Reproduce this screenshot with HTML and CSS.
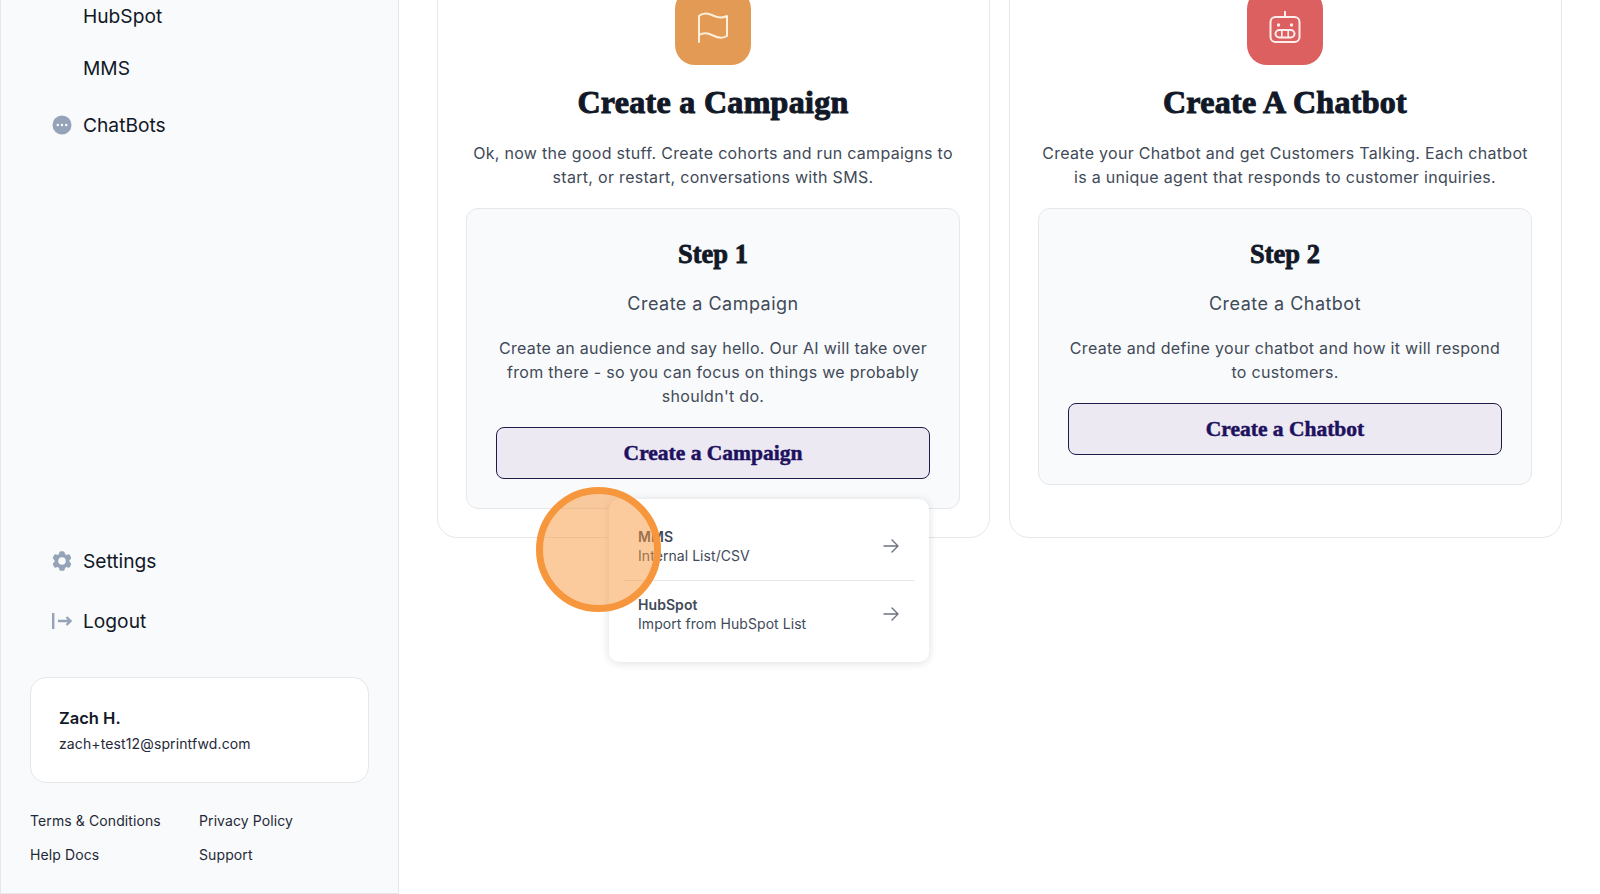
FILE: index.html
```html
<!DOCTYPE html>
<html lang="en">
	<head>
		<meta charset="UTF-8">
		<title>Get started</title>
		<link rel="stylesheet" href="styles.css">
	</head>
	<body>
		<div class="app">
			<aside class="sidebar">
				<ul class="nav nav-top">
					<li class="nav-sub"><a href="#">HubSpot</a></li>
					<li class="nav-sub"><a href="#">MMS</a></li>
					<li class="nav-main">
						<svg class="nav-icon" viewBox="0 0 20 20"><circle cx="10" cy="10" r="9.500" fill="#94a3b8"/><circle cx="5.800" cy="10" r="1.200" fill="#fff"/><circle cx="10" cy="10" r="1.200" fill="#fff"/><circle cx="14.200" cy="10" r="1.200" fill="#fff"/></svg>
						<a href="#">ChatBots</a>
					</li>
				</ul>
				<ul class="nav nav-bottom">
					<li class="nav-main">
						<svg class="nav-icon" viewBox="2 2 20 20"><path fill="#94a3b8" fill-rule="evenodd" d="M11.078 2.25c-.917 0-1.699.663-1.85 1.567L9.05 4.889c-.02.12-.115.26-.297.348a7.493 7.493 0 0 0-.986.57c-.166.115-.334.126-.45.083L6.3 5.508a1.875 1.875 0 0 0-2.282.819l-.922 1.597a1.875 1.875 0 0 0 .432 2.385l.84.692c.095.078.17.229.154.43a7.598 7.598 0 0 0 0 1.139c.015.2-.059.352-.153.43l-.841.692a1.875 1.875 0 0 0-.432 2.385l.922 1.597a1.875 1.875 0 0 0 2.282.818l1.019-.382c.115-.043.283-.031.45.082.312.214.641.405.985.57.182.088.277.228.297.35l.178 1.071c.151.904.933 1.567 1.85 1.567h1.844c.916 0 1.699-.663 1.85-1.567l.178-1.072c.02-.12.114-.26.297-.349.344-.165.673-.356.985-.57.167-.114.335-.125.45-.082l1.02.382a1.875 1.875 0 0 0 2.28-.819l.923-1.597a1.875 1.875 0 0 0-.432-2.385l-.84-.692c-.095-.078-.17-.229-.154-.43a7.614 7.614 0 0 0 0-1.139c-.016-.2.059-.352.153-.43l.84-.692c.708-.582.891-1.59.433-2.385l-.922-1.597a1.875 1.875 0 0 0-2.282-.818l-1.02.382c-.114.043-.282.031-.449-.083a7.49 7.49 0 0 0-.985-.57c-.183-.087-.277-.227-.297-.348l-.179-1.072a1.875 1.875 0 0 0-1.85-1.567h-1.843ZM12 15.75a3.75 3.75 0 1 0 0-7.5 3.75 3.75 0 0 0 0 7.5Z"/></svg>
						<a href="#">Settings</a>
					</li>
					<li class="nav-main">
						<svg class="nav-icon" viewBox="0 0 20 20" fill="none" stroke="#94a3b8" stroke-width="2.400"><path d="M1.200 2v16"/><path stroke-width="2.400" d="M6 10h12.500M14.500 6l4 4-4 4"/></svg>
						<a href="#">Logout</a>
					</li>
				</ul>
				<div class="user-card">
					<div class="user-name">Zach H.</div>
					<div class="user-mail">zach+test12@sprintfwd.com</div>
				</div>
				<div class="foot-links">
					<a href="#">Terms &amp; Conditions</a>
					<a href="#">Privacy Policy</a>
					<a href="#">Help Docs</a>
					<a href="#">Support</a>
				</div>
			</aside>

			<main class="main">
				<section class="card">
					<div class="card-icon icon-orange">
						<svg width="30" height="31" viewBox="0 0 30 31" fill="none" stroke="#fcefdc" stroke-width="2" stroke-linecap="round" stroke-linejoin="round"><path d="M1 30V4C5 .5 10 1 15 3.500S24 6.500 29 4V24C24 27 20 26 15 23.500S6 20 1 23"/></svg>
					</div>
					<h2 class="card-title">Create a Campaign</h2>
					<p class="card-desc">Ok, now the good stuff. Create cohorts and run campaigns to start, or restart, conversations with SMS.</p>
					<div class="step">
						<h3 class="step-title">Step 1</h3>
						<div class="step-sub">Create a Campaign</div>
						<p class="step-text">Create an audience and say hello. Our AI will take over from there - so you can focus on things we probably shouldn't do.</p>
						<a href="#" class="step-btn">Create a Campaign</a>
					</div>
				</section>
				<section class="card">
					<div class="card-icon icon-red">
						<svg width="32" height="32" viewBox="0 0 32 32" fill="none" stroke="#fdeeee" stroke-width="2"><rect x="1.500" y="6" width="29" height="25" rx="5"/><path d="M16 0v6"/><circle cx="9.500" cy="14" r="1.700" fill="#fdeeee" stroke="none"/><circle cx="22.500" cy="14" r="1.700" fill="#fdeeee" stroke="none"/><rect x="6.500" y="19" width="19" height="7.500" rx="3.750"/><path d="M12.800 19v7.500M19.200 19v7.500" stroke-width="1.600"/></svg>
					</div>
					<h2 class="card-title">Create A Chatbot</h2>
					<p class="card-desc">Create your Chatbot and get Customers Talking. Each chatbot is a unique agent that responds to customer inquiries.</p>
					<div class="step">
						<h3 class="step-title">Step 2</h3>
						<div class="step-sub">Create a Chatbot</div>
						<p class="step-text">Create and define your chatbot and how it will respond to customers.</p>
						<a href="#" class="step-btn">Create a Chatbot</a>
					</div>
				</section>
			</main>
		</div>

		<ul class="dropdown">
			<li class="drop-row">
				<div>
					<div class="drop-name">MMS</div>
					<div class="drop-info">Internal List/CSV</div>
				</div>
				<svg class="drop-arrow" viewBox="0 0 16 16" fill="none" stroke="#6b7280" stroke-width="1.400" stroke-linecap="round" stroke-linejoin="round"><path d="M1 8h14M9 2l6 6-6 6"/></svg>
			</li>
			<li class="drop-row">
				<div>
					<div class="drop-name">HubSpot</div>
					<div class="drop-info">Import from HubSpot List</div>
				</div>
				<svg class="drop-arrow" viewBox="0 0 16 16" fill="none" stroke="#6b7280" stroke-width="1.400" stroke-linecap="round" stroke-linejoin="round"><path d="M1 8h14M9 2l6 6-6 6"/></svg>
			</li>
		</ul>
		<div class="click-mark"></div>
	</body>
</html>
```

FILE: styles.css
```css
*{
	margin: 0;
	padding: 0;
	box-sizing: border-box;
}
html,body{
	height: 894px;
	overflow: hidden;
	background: #fff;
}
body{
	font-family: Inter, "Liberation Sans", sans-serif;
	color: #111827;
}
a{
	text-decoration: none;
	color: inherit;
}
ul{
	list-style: none;
}

.app{
	display: flex;
	height: 894px;
	align-items: flex-start;
}

/* sidebar */
.sidebar{
	width: 399px;
	height: 894px;
	flex-shrink: 0;
	display: flex;
	flex-direction: column;
	background: #f9fafb;
	border: 1px solid #e5e7eb;
	border-top: 0;
	padding: 0 29px;
}
.nav{
	font-size: 19.2px;
	line-height: 24px;
}
.nav-top{
	margin-top: 4px;
}
.nav-sub{
	padding-left: 53px;
	height: 52px;
}
.nav-main{
	display: flex;
	align-items: center;
	gap: 11px;
	padding-left: 22px;
	height: 60px;
}
.nav-top .nav-main{
	height: 24px;
	margin-top: 5px;
}
.nav-icon{
	width: 20px;
	height: 20px;
}
.nav-bottom{
	margin-top: auto;
}
.user-card{
	height: 106px;
	margin-top: 26px;
	padding: 28px 28px 0;
	background: #fff;
	border: 1px solid #e5e7eb;
	border-radius: 16px;
}
.user-name{
	font-size: 16.500px;
	line-height: 24px;
	font-weight: 600;
}
.user-mail{
	font-size: 14px;
	line-height: 22px;
	margin-top: 3px;
	letter-spacing: .12px;
	color: #1f2937;
}
.foot-links{
	display: grid;
	grid-template-columns: 169px 1fr;
	grid-auto-rows: 33.500px;
	margin-top: 21px;
	margin-bottom: 22px;
	font-size: 14px;
	line-height: 33px;
	letter-spacing: .1px;
	color: #1f2937;
}

/* cards */
.main{
	flex: 1;
	display: grid;
	grid-template-columns: 553px 553px;
	gap: 19px;
	padding: 0 38px;
	margin-top: -40px;
}
.card{
	height: 578px;
	padding: 28px 29px 0 28px;
	background: #fff;
	border: 1px solid #e5e7eb;
	border-radius: 20px;
	text-align: center;
}
.card-icon{
	width: 76px;
	height: 76px;
	margin: 0 auto;
	display: flex;
	align-items: center;
	justify-content: center;
	border-radius: 20px;
}
.icon-orange{
	background: #e39a55;
}
.icon-red{
	background: #dd6060;
}
.card-title{
	margin-top: 17px;
	font-family: "Liberation Serif", serif;
	font-size: 32px;
	line-height: 40px;
	font-weight: 700;
	letter-spacing: .3px;
	-webkit-text-stroke: 1px #111827;
	color: #111827;
}
.card-desc{
	margin-top: 19px;
	font-size: 16px;
	line-height: 24px;
	letter-spacing: .3px;
	color: #414a58;
}
.step{
	margin-top: 19px;
	padding: 29px 29px 29px;
	background: #f9fafb;
	border: 1px solid #e5e7eb;
	border-radius: 12px;
}
.step-title{
	font-family: "Liberation Serif", serif;
	font-size: 26.500px;
	line-height: 32px;
	font-weight: 700;
	-webkit-text-stroke: .8px #111827;
	color: #111827;
}
.step-sub{
	margin-top: 22px;
	font-size: 18px;
	line-height: 24px;
	letter-spacing: .48px;
	color: #414a58;
}
.step-text{
	margin-top: 20px;
	font-size: 16px;
	line-height: 24px;
	letter-spacing: .3px;
	color: #414a58;
}
.step-btn{
	display: block;
	height: 52px;
	margin-top: 19px;
	background: #ece9f3;
	border: 1px solid #1e1b4b;
	border-radius: 8px;
	font-family: "Liberation Serif", serif;
	font-size: 21.500px;
	line-height: 50px;
	font-weight: 700;
	-webkit-text-stroke: .5px #1e1160;
	color: #1e1160;
}

/* dropdown and the click marker lie over the cards */
.dropdown{
	position: absolute;
	left: 609px;
	top: 499px;
	width: 320px;
	height: 163px;
	padding: 14px 15px 0;
	background: #fff;
	border-radius: 10px;
	box-shadow: 0 1px 8px rgba(17,24,39,.14);
}
.drop-row{
	display: flex;
	align-items: center;
	justify-content: space-between;
	height: 67px;
	padding: 0 15px 2px 14px;
	font-size: 14px;
	line-height: 19px;
	letter-spacing: .06px;
	color: #414a58;
}
.drop-row + .drop-row{
	padding-bottom: 0;
	border-top: 1px solid #e5e7eb;
}
.drop-name{
	font-weight: 600;
}
.drop-arrow{
	width: 16px;
	height: 16px;
}
.click-mark{
	position: absolute;
	left: 536px;
	top: 487px;
	width: 125px;
	height: 125px;
	border: 7px solid #f7973d;
	border-radius: 50%;
	background: rgba(247,151,61,.5);
}
```
